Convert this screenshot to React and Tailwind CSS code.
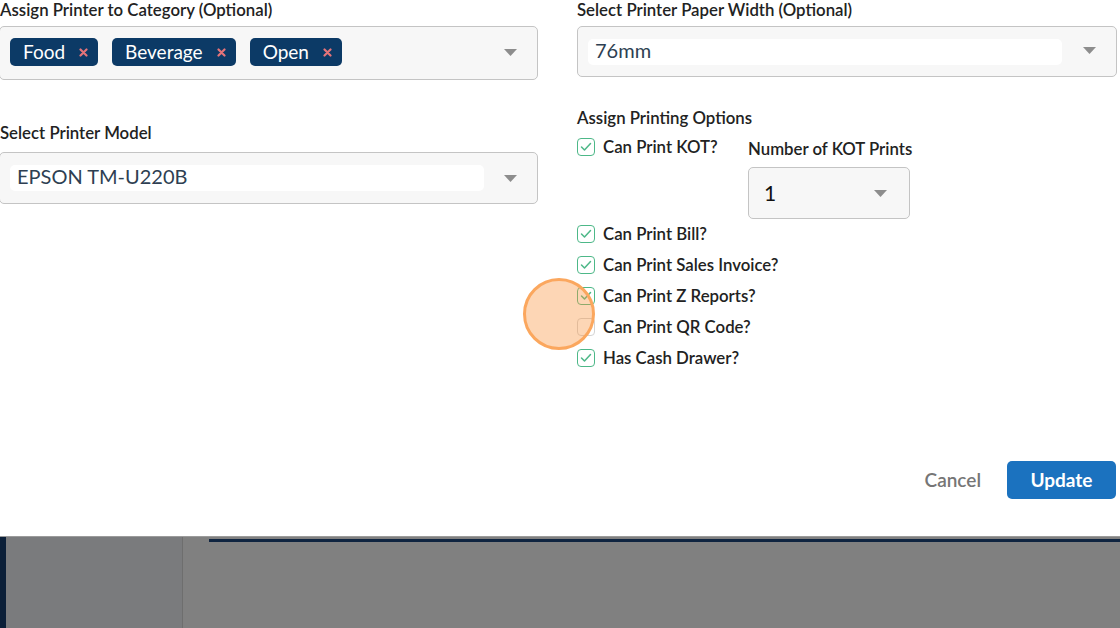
import React from "react";

const font = { fontFamily: "Lato, 'Open Sans', sans-serif" };

function Caret({ className = "" }) {
  return (
    <svg width="13" height="7" viewBox="0 0 13 7" className={className}>
      <path d="M0 0 L13 0 L6.5 7 Z" fill="#8d8d8d" />
    </svg>
  );
}

function Chip({ label }) {
  return (
    <div className="flex h-[28px] items-center rounded-[5px] bg-[#0c3a66] pl-[13px] pr-[10px]">
      <span className="pb-[2px] text-[19px] leading-none text-white">{label}</span>
      <svg width="9" height="9" viewBox="0 0 9 9" className="ml-[14px]">
        <path d="M1.5 1.5 L7.5 7.5 M7.5 1.5 L1.5 7.5" stroke="#e57479" strokeWidth="2.2" strokeLinecap="round" />
      </svg>
    </div>
  );
}

function Check({ checked = true }) {
  return (
    <div
      className={
        "flex h-[18px] w-[18px] items-center justify-center rounded-[4px] border-[1.5px] bg-white " +
        (checked ? "border-[#4db888]" : "border-[#d4d4d4]")
      }
    >
      {checked && (
        <svg width="12" height="10" viewBox="0 0 12 10">
          <path d="M1.5 5 L4.5 8 L10.5 1.5" fill="none" stroke="#4db888" strokeWidth="1.5" strokeLinecap="round" strokeLinejoin="round" />
        </svg>
      )}
    </div>
  );
}

function Option({ label, checked = true }) {
  return (
    <div className="flex h-[31px] items-center">
      <Check checked={checked} />
      <span className="ml-[8px] text-[16.8px] font-semibold text-[#222]">{label}</span>
    </div>
  );
}

export default function App() {
  return (
    <div className="relative h-[628px] w-[1120px] overflow-hidden bg-white" style={font}>
      <div className="flex h-[536px] flex-col">
        <div className="grid grid-cols-[538px_540px] gap-x-[39px]">
          {/* Left column */}
          <div className="flex flex-col">
            <div className="h-[20px] whitespace-nowrap text-[16.8px] font-semibold leading-[20px] text-[#222]">
              Assign Printer to Category (Optional)
            </div>
            <div className="-ml-px mt-[6px] flex h-[54px] items-center rounded-[5px] border border-[#c4c4c4] bg-[#f7f7f7] pb-[2px] pl-[10px] pr-[20px]">
              <div className="flex gap-[14px]">
                <Chip label="Food" />
                <Chip label="Beverage" />
                <Chip label="Open" />
              </div>
              <Caret className="ml-auto" />
            </div>
            <div className="mt-[43px] h-[20px] text-[16.8px] font-semibold leading-[20px] text-[#222]">
              Select Printer Model
            </div>
            <div className="-ml-px mt-[9px] flex h-[52px] items-center rounded-[5px] border border-[#c4c4c4] bg-[#f7f7f7] pl-[10px] pr-[20px]">
              <div className="flex h-[26px] w-[474px] items-center rounded-[5px] bg-white pb-[5px] pl-[7px] text-[20px] leading-none text-[#2e3f52]">
                EPSON TM-U220B
              </div>
              <Caret className="ml-auto" />
            </div>
          </div>

          {/* Right column */}
          <div className="flex flex-col">
            <div className="h-[20px] whitespace-nowrap text-[16.8px] font-semibold leading-[20px] text-[#222]">
              Select Printer Paper Width (Optional)
            </div>
            <div className="mt-[6px] flex h-[51px] items-center rounded-[5px] border border-[#c4c4c4] bg-[#f7f7f7] pl-[10px] pr-[20px]">
              <div className="flex h-[26px] w-[474px] items-center rounded-[5px] bg-white pb-[4px] pl-[7px] text-[20px] leading-none text-[#2e3f52]">
                76mm
              </div>
              <Caret className="ml-auto -mt-[2px]" />
            </div>
            <div className="mt-[31px] h-[20px] text-[16.8px] font-semibold leading-[20px] text-[#222]">
              Assign Printing Options
            </div>
            <div className="mt-[9px] flex">
              <div className="flex h-[20px] w-[171px] items-center">
                <Check />
                <span className="ml-[8px] text-[16.8px] font-semibold text-[#222]">Can Print KOT?</span>
              </div>
              <div className="flex flex-col">
                <div className="h-[23px] pt-[1px] text-[16.8px] font-semibold leading-[22px] text-[#222]">
                  Number of KOT Prints
                </div>
                <div className="mt-[7px] flex h-[52px] w-[162px] items-center rounded-[5px] border border-[#c4c4c4] bg-[#f7f7f7] pb-[2px] pl-[15px] pr-[22px]">
                  <span className="text-[21px] leading-none text-[#111]">1</span>
                  <Caret className="ml-auto mt-[2px]" />
                </div>
              </div>
            </div>
            <div className="-mt-[1px] flex flex-col">
              <Option label="Can Print Bill?" />
              <Option label="Can Print Sales Invoice?" />
              <Option label="Can Print Z Reports?" />
              <Option label="Can Print QR Code?" checked={false} />
              <Option label="Has Cash Drawer?" />
            </div>
          </div>
        </div>

        <div className="mt-auto mb-[37px] flex items-center justify-end gap-[26px] pr-[4px]">
          <span className="text-[19px] font-semibold text-[#767676]">Cancel</span>
          <button className="flex h-[38px] w-[109px] items-center justify-center rounded-[5px] bg-[#1b72bf] text-[19px] font-bold text-white">
            Update
          </button>
        </div>
      </div>

      {/* bottom overlay area */}
      <div className="flex h-[92px] border-t border-[#9b9b9b] bg-[#808080]">
        <div className="w-[6px] bg-[#0b1f38]" />
        <div className="w-[177px] border-r border-[#6e6e6e] bg-[#7a7b7d]" />
        <div className="flex-1 pl-[26px] pt-[2px]">
          <div className="h-[3px] bg-[#0f2440]" />
        </div>
      </div>

      {/* click indicator */}
      <div className="absolute left-[523px] top-[278px] h-[72px] w-[72px] rounded-full border-[3px] border-[#fba75e] bg-[rgba(251,146,60,0.38)]" />
    </div>
  );
}
